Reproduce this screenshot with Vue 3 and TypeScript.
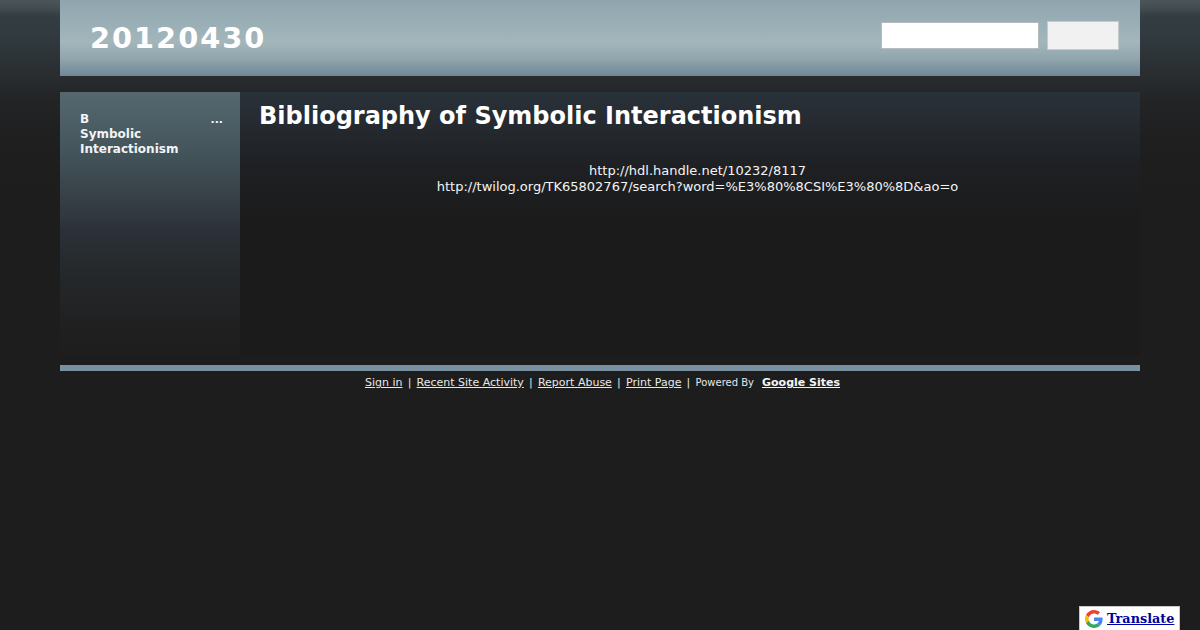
<script setup lang="ts">
const links: string[] = ['http://hdl.handle.net/10232/8117', 'http://twilog.org/TK65802767/search?word=%E3%80%8CSI%E3%80%8D&ao=o']
</script>

<template>
  <div class="page">
    <header class="header">
      <h1 class="site-title">20120430</h1>
      <form class="search" @submit.prevent>
        <input class="search-input" type="text" aria-label="Search" />
        <button class="search-btn" type="submit" aria-label="Search"></button>
      </form>
    </header>

    <div class="columns">
      <nav class="sidebar">
        <div class="nav-item">
          <span class="nav-label">B<br />Symbolic<br />Interactionism</span>
          <span class="nav-more">...</span>
        </div>
      </nav>
      <main class="content">
        <h2 class="page-title">Bibliography of Symbolic Interactionism</h2>
        <div class="body-text">
          <div v-for="l in links" :key="l">{{ l }}</div>
        </div>
      </main>
    </div>

    <div class="rule"></div>
    <footer class="footer">
      <a>Sign in</a><span class="sep">|</span><a>Recent Site Activity</a><span class="sep">|</span><a>Report Abuse</a><span class="sep">|</span><a>Print Page</a><span class="sep">|</span><span class="powered">Powered By</span><a class="gs">Google Sites</a>
    </footer>
  </div>

  <div class="translate">
    <svg class="g" width="18" height="18" viewBox="0 0 48 48" aria-hidden="true">
      <path fill="#EA4335" d="M24 9.5c3.5 0 6.7 1.2 9.2 3.600l6.900-6.900C35.900 2.400 30.400 0 24 0 14.600 0 6.500 5.400 2.600 13.200l8 6.200C12.500 13.700 17.800 9.500 24 9.500z"/>
      <path fill="#4285F4" d="M46.900 24.500c0-1.600-.2-3.100-.4-4.500H24v9h12.900c-.6 3-2.200 5.500-4.700 7.200l7.700 6c4.500-4.200 7-10.300 7-17.700z"/>
      <path fill="#FBBC05" d="M10.500 28.600c-.5-1.400-.8-3-.8-4.600s.3-3.200.8-4.600l-8-6.200C.9 16.500 0 20.100 0 24s.9 7.500 2.600 10.800l7.900-6.200z"/>
      <path fill="#34A853" d="M24 48c6.500 0 11.900-2.100 15.900-5.800l-7.700-6c-2.100 1.400-4.900 2.300-8.200 2.300-6.200 0-11.500-4.200-13.400-9.900l-8 6.200C6.500 42.600 14.600 48 24 48z"/>
    </svg>
    <a class="t-link">Translate</a>
  </div>
</template>

<style>
html, body {
  margin: 0;
  height: 100%;
  background: #1d1d1d;
}
body {
  background: linear-gradient(180deg, #4b5457 0, #434c50 8px, #343d42 16px, #30393e 40px, #2a2e31 72px, #222426 100px, #1f1f20 140px, #1d1d1d 200px) no-repeat #1d1d1d;
  overflow: hidden;
}
</style>

<style scoped>
.page {
  width: 1080px;
  margin: 0 auto;
  font-family: "DejaVu Sans", sans-serif;
  color: #fff;
}
.header {
  height: 76px;
  box-sizing: border-box;
  display: flex;
  align-items: flex-start;
  justify-content: space-between;
  padding: 21px 21px 0 30px;
  background: linear-gradient(180deg, #8fa5ae 0, #94a9b1 10px, #a3b6bc 42px, #8fa4ab 60px, #6d8899 76px);
}
.site-title {
  margin: 0;
  font-size: 28.8px;
  line-height: 34px;
  font-weight: 700;
  letter-spacing: 2px;
}
.search {
  display: flex;
  gap: 8px;
  align-items: flex-start;
}
.search-input {
  width: 158px;
  height: 27px;
  margin-top: 1px;
  box-sizing: border-box;
  border: 1px solid #b4bcc0;
  background: #fff;
  padding: 0;
}
.search-btn {
  width: 72px;
  height: 29px;
  box-sizing: border-box;
  border: 1px solid #c4cbce;
  background: #f1f1f1;
  padding: 0;
}
.columns {
  display: flex;
  margin-top: 16px;
  height: 263px;
}
.sidebar {
  width: 180px;
  box-sizing: border-box;
  padding: 20px 17px 0 20px;
  background: linear-gradient(180deg, #56686f 0, #44555c 58px, #363f45 108px, #2c3139 138px, #25292b 178px, #1f1f20 240px, #1e1e1f 263px);
}
.nav-item {
  display: flex;
  justify-content: space-between;
  font-size: 12px;
  line-height: 15px;
  font-weight: 700;
  color: #f2f4f5;
}
.nav-more {
  font-size: 11px;
  line-height: 15px;
}
.content {
  flex: 1;
  padding: 0 19px;
  background: linear-gradient(180deg, #293139 0, #262c32 25px, #1e2023 75px, #1b1b1b 130px);
}
.page-title {
  margin: 0;
  padding-top: 9px;
  font-size: 24px;
  line-height: 30px;
  font-weight: 700;
  color: #fff;
}
.body-text {
  margin-top: 32px;
  margin-left: 15px;
  text-align: center;
  font-size: 13px;
  line-height: 16px;
  color: #f4f4f4;
}
.rule {
  height: 6px;
  margin-top: 10px;
  background: #7890a0;
}
.footer {
  text-align: center;
  font-size: 11px;
  line-height: 13px;
  padding-top: 5px;
  padding-left: 5px;
  color: #e6e6e6;
}
.footer a {
  text-decoration: underline;
  color: #e8e8e8;
}
.sep {
  margin: 0 5.2px;
}
.powered {
  font-size: 10px;
}
.footer .gs {
  margin-left: 8px;
  font-weight: 700;
  color: #f4f4f4;
}
.translate {
  position: fixed;
  right: 20px;
  bottom: 0;
  width: 101px;
  height: 24px;
  box-sizing: border-box;
  background: #fff;
  border: 1px solid #c8c8c8;
  border-bottom: 0;
  display: flex;
  align-items: center;
  padding-left: 5px;
  gap: 4px;
}
.t-link {
  font-family: "DejaVu Serif", serif;
  font-size: 12.8px;
  font-weight: 700;
  color: #00009e;
  text-decoration: underline;
}
</style>
